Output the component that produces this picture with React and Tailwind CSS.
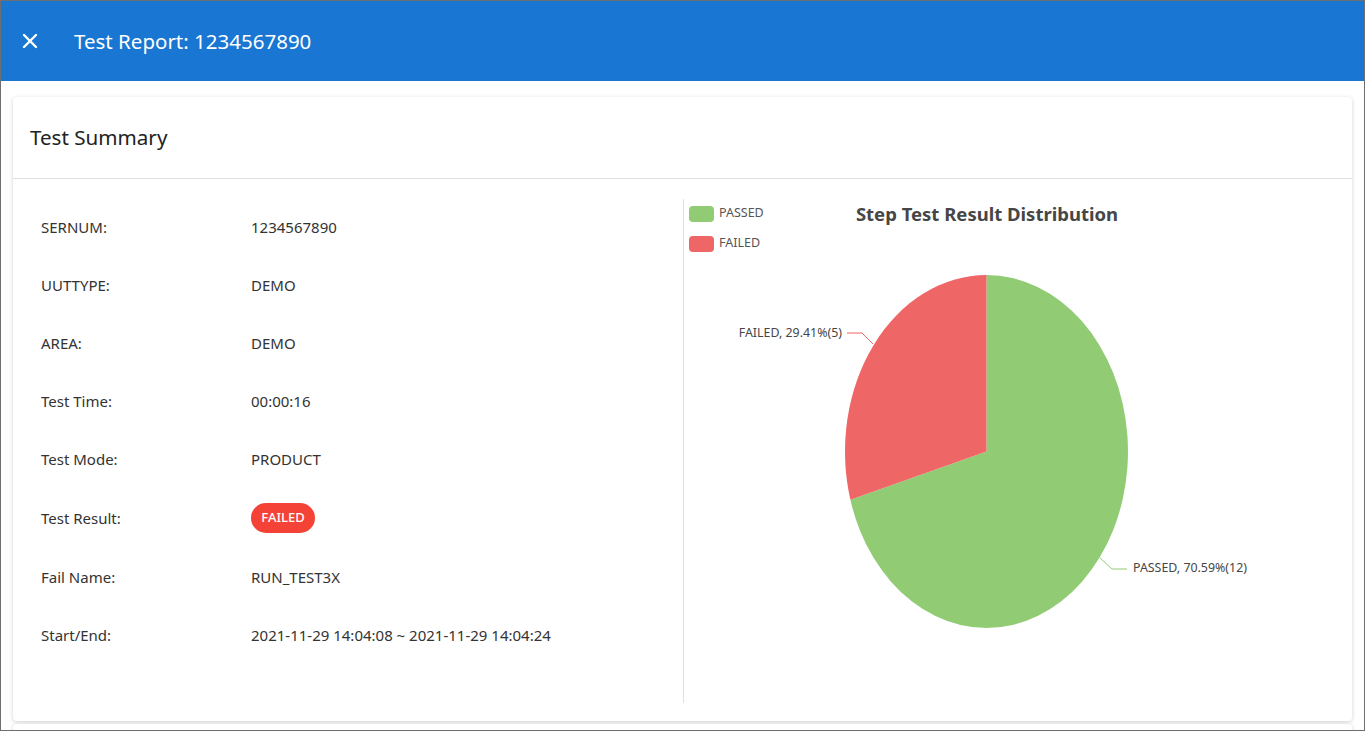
import React from "react";

const rows = [
  ["SERNUM:", "1234567890"],
  ["UUTTYPE:", "DEMO"],
  ["AREA:", "DEMO"],
  ["Test Time:", "00:00:16"],
  ["Test Mode:", "PRODUCT"],
  ["Test Result:", "__badge__"],
  ["Fail Name:", "RUN_TEST3X"],
  ["Start/End:", "2021-11-29 14:04:08 ~ 2021-11-29 14:04:24"],
];

function Chart() {
  const cx = 302.5, cy = 252.5, rx = 141.5, ry = 176.5;
  const bx = 166.4, by = 300.8;
  const font = "'Noto Sans', 'Open Sans', sans-serif";
  return (
    <svg width="668" height="504" viewBox="0 0 668 504" className="block">
      <rect x="5" y="7" width="25" height="16" rx="4" fill="#91cc75" />
      <text x="35" y="15" fontSize="12.5" fill="#555" dominantBaseline="middle" fontFamily={font}>PASSED</text>
      <rect x="5" y="37" width="25" height="16" rx="4" fill="#ee6666" />
      <text x="35" y="45" fontSize="12.5" fill="#555" dominantBaseline="middle" fontFamily={font}>FAILED</text>
      <text x="303" y="17" fontSize="18.5" fontWeight="700" fill="#464646" textAnchor="middle" dominantBaseline="middle" fontFamily={font}>Step Test Result Distribution</text>
      <path d={`M ${cx} ${cy} L ${cx} ${cy - ry} A ${rx} ${ry} 0 1 1 ${bx} ${by} Z`} fill="#91cc75" />
      <path d={`M ${cx} ${cy} L ${cx} ${cy - ry} A ${rx} ${ry} 0 0 0 ${bx} ${by} Z`} fill="#ee6666" />
      <polyline points="189,145 178,134 163,134" fill="none" stroke="#ee6666" strokeWidth="1" />
      <text x="158" y="134.5" fontSize="12.4" fill="#464646" textAnchor="end" dominantBaseline="middle" fontFamily={font}>FAILED, 29.41%(5)</text>
      <polyline points="416,359 428,370 443,370" fill="none" stroke="#91cc75" strokeWidth="1" />
      <text x="449" y="370" fontSize="12.4" fill="#464646" dominantBaseline="middle" fontFamily={font}>PASSED, 70.59%(12)</text>
    </svg>
  );
}

export default function App() {
  return (
    <div
      className="h-[731px] w-full overflow-hidden border border-[#6e6e6e] bg-white"
      style={{ fontFamily: "'Noto Sans', 'Open Sans', sans-serif" }}
    >
      <div className="flex h-[80px] items-center bg-[#1976d2] text-white">
        <svg width="16" height="16" viewBox="0 0 16 16" className="ml-[21px]">
          <path d="M2 2 L14 14 M14 2 L2 14" stroke="white" strokeWidth="2.4" strokeLinecap="round" />
        </svg>
        <div className="ml-[36px] text-[20.5px] leading-none">Test Report: 1234567890</div>
      </div>
      <div className="px-[12px] pt-[16px]">
        <div className="rounded-[4px] bg-white shadow-[0_1px_4px_rgba(0,0,0,0.18)]">
          <div className="flex h-[82px] items-center border-b border-[#e0e0e0] px-[17px] text-[20.6px] text-[#222]">
            Test Summary
          </div>
          <div className="flex pt-[20px] pb-[18px]">
            <div className="-mt-px h-[505px] w-[670px] pl-[28px] text-[15px] text-[#333]">
              {rows.map(([k, v]) =>
                v === "__badge__" ? (
                  <div key={k} className="flex h-[60px] items-center">
                    <div className="w-[210px]">{k}</div>
                    <div className="flex h-[30px] w-[64px] items-center justify-center rounded-full bg-[#f44336] text-[13px] font-medium text-white">
                      FAILED
                    </div>
                  </div>
                ) : (
                  <div key={k} className="flex h-[58px] items-center">
                    <div className="w-[210px]">{k}</div>
                    <div>{v}</div>
                  </div>
                )
              )}
            </div>
            <div className="h-[504px] flex-1 border-l border-[#e0e0e0]">
              <Chart />
            </div>
          </div>
        </div>
        <div className="mt-[3px] h-[40px] rounded-[4px] bg-white shadow-[0_1px_4px_rgba(0,0,0,0.18)]"></div>
      </div>
    </div>
  );
}
